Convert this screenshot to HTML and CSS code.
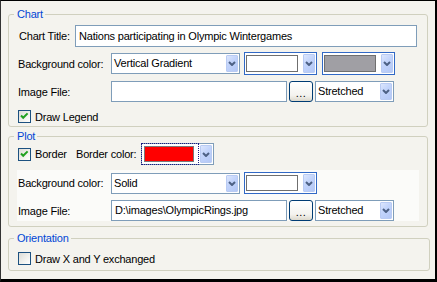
FILE: index.html
```html
<!DOCTYPE html>
<html lang="en">
<head>
    <meta charset="UTF-8">
    <title>Chart Properties</title>
    <link rel="stylesheet" href="styles.css">
</head>
<body>
    <div class="dialog">

        <!-- Chart group -->
        <fieldset class="group">
            <legend>Chart</legend>
            <div class="row row-title">
                <label class="lbl lbl-title">Chart Title:</label>
                <div class="textbox textbox-title">Nations participating in Olympic Wintergames</div>
            </div>
            <div class="row row-bg">
                <label class="lbl">Background color:</label>
                <div class="combo combo-fill">
                    <span class="combo-text">Vertical Gradient</span>
                    <span class="drop"><svg width="8" height="5" viewBox="0 0 8 5"><path d="M1 1 L4 4 L7 1" /></svg></span>
                </div>
                <div class="combo combo-color">
                    <span class="swatch swatch-white"></span>
                    <span class="drop"><svg width="8" height="5" viewBox="0 0 8 5"><path d="M1 1 L4 4 L7 1" /></svg></span>
                </div>
                <div class="combo combo-color">
                    <span class="swatch swatch-gray"></span>
                    <span class="drop"><svg width="8" height="5" viewBox="0 0 8 5"><path d="M1 1 L4 4 L7 1" /></svg></span>
                </div>
            </div>
            <div class="row row-file">
                <label class="lbl">Image File:</label>
                <div class="textbox textbox-file"></div>
                <button class="browse">...</button>
                <div class="combo combo-mode">
                    <span class="combo-text">Stretched</span>
                    <span class="drop"><svg width="8" height="5" viewBox="0 0 8 5"><path d="M1 1 L4 4 L7 1" /></svg></span>
                </div>
            </div>
            <div class="row row-check row-legend">
                <span class="check checked"><svg width="11" height="11" viewBox="0 0 11 11"><path d="M2 4.5 L4.2 6.8 L8.6 2.4" /></svg></span>
                <span class="check-text">Draw Legend</span>
            </div>
        </fieldset>

        <!-- Plot group -->
        <fieldset class="group group-plot">
            <legend>Plot</legend>
            <div class="row row-border">
                <div class="border-toggle">
                    <span class="check checked"><svg width="11" height="11" viewBox="0 0 11 11"><path d="M2 4.5 L4.2 6.8 L8.6 2.4" /></svg></span>
                    <span class="check-text">Border</span>
                </div>
                <label class="lbl lbl-border">Border color:</label>
                <div class="combo combo-color combo-focus">
                    <span class="focus"><span class="swatch swatch-red"></span></span>
                    <span class="drop"><svg width="8" height="5" viewBox="0 0 8 5"><path d="M1 1 L4 4 L7 1" /></svg></span>
                </div>
            </div>
            <div class="plot-panel">
                <div class="row row-bg">
                    <label class="lbl">Background color:</label>
                    <div class="combo combo-fill">
                        <span class="combo-text">Solid</span>
                        <span class="drop"><svg width="8" height="5" viewBox="0 0 8 5"><path d="M1 1 L4 4 L7 1" /></svg></span>
                    </div>
                    <div class="combo combo-color">
                        <span class="swatch swatch-white"></span>
                        <span class="drop"><svg width="8" height="5" viewBox="0 0 8 5"><path d="M1 1 L4 4 L7 1" /></svg></span>
                    </div>
                </div>
                <div class="row row-file">
                    <label class="lbl">Image File:</label>
                    <div class="textbox textbox-file">D:\images\OlympicRings.jpg</div>
                    <button class="browse">...</button>
                    <div class="combo combo-mode">
                        <span class="combo-text">Stretched</span>
                        <span class="drop"><svg width="8" height="5" viewBox="0 0 8 5"><path d="M1 1 L4 4 L7 1" /></svg></span>
                    </div>
                </div>
            </div>
        </fieldset>

        <!-- Orientation group -->
        <fieldset class="group group-orient">
            <legend>Orientation</legend>
            <div class="row row-check">
                <span class="check"></span>
                <span class="check-text">Draw X and Y exchanged</span>
            </div>
        </fieldset>

    </div>
</body>
</html>
```

FILE: styles.css
```css
:root {
    --dialog-bg: #f4f3ee;
    --panel-bg: #fbfbf9;
    --group-border: #d0d0bf;
    --group-title: #0046d5;
    --field-border: #7f9db9;
    --focus-border: #3169c6;
    --drop-bg: #c1d3fb;
    --arrow: #4d6185;
}

* {
    box-sizing: border-box;
}

body {
    margin: 0;
    font-family: "Liberation Sans", Arial, sans-serif;
    font-size: 11px;
    letter-spacing: -0.2px;
    color: #000;
}

.dialog {
    width: 437px;
    height: 282px;
    background: var(--dialog-bg);
    border-top: 1px solid #000;
    border-left: 1px solid #333;
    border-right: 2px solid #000;
    border-bottom: 3px solid #000;
}

/* group boxes */
.group {
    width: 420px;
    margin: 3px 7px 0 7px;
    padding: 4px 9px 1px 9px;
    border: 1px solid var(--group-border);
    border-radius: 3px;
    min-width: 0;
}

.group:first-child {
    margin-top: 7px;
}

.group legend {
    color: var(--group-title);
    line-height: 13px;
    padding: 0 2px 0 3px;
    margin-left: -4px;
}

.group-plot {
    padding-top: 0;
    padding-bottom: 5px;
}

.group-orient {
    width: 422px;
    margin-top: 5px;
    padding-top: 5px;
    padding-bottom: 3px;
}

/* rows */
.row {
    display: flex;
    align-items: center;
}

.row-title {
    height: 22px;
}

.row-bg {
    height: 23px;
    margin-top: 5px;
}

.row-file {
    height: 21px;
    margin-top: 6px;
}

.row-check {
    height: 17px;
}

.row-legend {
    margin-top: 6px;
}

.lbl {
    width: 93px;
    flex-shrink: 0;
    white-space: nowrap;
}

.lbl-title {
    width: 57px;
    padding-left: 1px;
}

/* text boxes */
.textbox {
    height: 22px;
    line-height: 20px;
    padding: 0 3px;
    background: #fff;
    border: 1px solid var(--field-border);
    white-space: nowrap;
    overflow: hidden;
}

.textbox-title {
    width: 342px;
}

.textbox-file {
    width: 176px;
    height: 21px;
    line-height: 19px;
}

/* combo boxes */
.combo {
    display: flex;
    height: 21px;
    padding: 1px;
    background: #fff;
    border: 1px solid var(--field-border);
    flex-shrink: 0;
}

.combo-text {
    flex: 1;
    line-height: 17px;
    padding-left: 1px;
    white-space: nowrap;
}

.drop {
    width: 12px;
    display: flex;
    align-items: center;
    justify-content: center;
    background: linear-gradient(135deg, #dce6fd 0%, var(--drop-bg) 45%, #b4c8f6 100%);
    border: 1px solid #b9cbf3;
    border-radius: 1px;
}

.drop svg path {
    fill: none;
    stroke: var(--arrow);
    stroke-width: 2;
}

.combo-fill {
    width: 129px;
    margin-right: 4px;
}

.combo-color {
    width: 73px;
    height: 23px;
    margin-right: 5px;
    border-color: var(--focus-border);
}

.combo-mode {
    width: 79px;
    margin-left: 2px;
}

.swatch {
    flex: 1;
    margin: 1px 5px 1px 0;
    border: 1px solid #6f6f6f;
}

.swatch-white {
    background: #fff;
}

.swatch-gray {
    background: #a09fa4;
}

.swatch-red {
    display: block;
    height: 100%;
    margin: 0;
    background: #ff0000;
    border-color: #7a7a7a;
}

.combo-focus {
    height: 22px;
    border-color: var(--field-border);
}

.focus {
    flex: 1;
    margin: -2px 1px -2px -2px;
    padding: 2px 4px 2px 2px;
    border: 1px dotted #1b1b80;
}

/* browse button */
.browse {
    width: 24px;
    height: 21px;
    margin-left: 2px;
    padding: 0 0 2px 0;
    font-family: inherit;
    font-size: 11px;
    letter-spacing: 0.5px;
    line-height: 1;
    display: flex;
    align-items: flex-end;
    justify-content: center;
    border: 1px solid #003c74;
    border-radius: 3px;
    background: linear-gradient(#ffffff 0%, #f4f3ef 70%, #dcd8cc 100%);
    color: #000;
}

/* check boxes */
.check {
    width: 13px;
    height: 13px;
    flex-shrink: 0;
    border: 1px solid #1c5180;
    background: linear-gradient(135deg, #dcdcd7 0%, #f2f2ee 60%, #ffffff 100%);
    display: flex;
}

.check svg path {
    fill: none;
    stroke: #21a121;
    stroke-width: 2;
}

.check-text {
    margin-left: 4px;
    white-space: nowrap;
}

/* plot group */
.row-border {
    height: 22px;
}

.border-toggle {
    width: 58px;
    display: flex;
    align-items: center;
}

.lbl-border {
    width: 65px;
}

.plot-panel {
    margin: 5px -1px 0 -1px;
    padding: 2px 0 0 1px;
    background: var(--panel-bg);
}

.plot-panel .row-bg {
    margin-top: 0;
    height: 22px;
}

.plot-panel .row-bg .combo-color {
    height: 22px;
}
```
